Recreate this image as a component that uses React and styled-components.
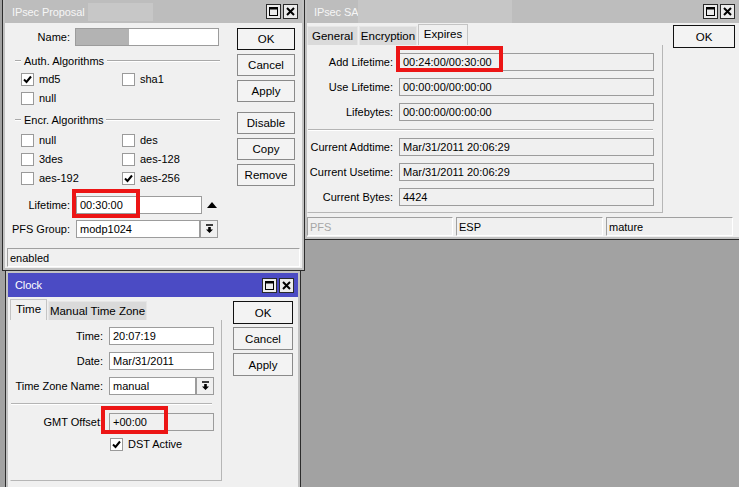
import React from "react";
import styled, { createGlobalStyle } from "styled-components";

const GlobalStyle = createGlobalStyle`
  html, body { margin: 0; padding: 0; }
  body {
    font-family: "Liberation Sans", Arial, sans-serif;
    font-size: 11px;
    color: #000;
  }
  * { box-sizing: border-box; }
`;

const Desktop = styled.div`
  position: relative;
  width: 739px;
  height: 487px;
  overflow: hidden;
  background: #a2a2a2;
`;

const Win = styled.div`
  position: absolute;
  left: ${(p) => p.$x}px;
  top: ${(p) => p.$y}px;
  width: ${(p) => p.$w}px;
  height: ${(p) => p.$h}px;
  border: 1px solid #2c2c2c;
  background: #c2c2c2;
  padding: ${(p) => p.$padTop || 0}px 2px 2px;
  display: flex;
  flex-direction: column;
`;

const TitleBar = styled.div`
  position: relative;
  flex-shrink: 0;
  height: ${(p) => p.$h}px;
  display: flex;
  align-items: center;
  padding: 0 4px 0 7px;
  background: ${(p) => (p.$active ? "#4b4bc4" : "#bdbdbd")};
  color: ${(p) => (p.$active ? "#ffffff" : "#f6f6f6")};
  font-size: 11px;
  letter-spacing: -0.1px;
`;

const TitleText = styled.span`
  flex: 1;
  white-space: nowrap;
`;

const TitleBtn = styled.div`
  width: 15px;
  height: 15px;
  margin-left: 2px;
  border: 1px solid #2a2a2a;
  background: #ececec;
  display: flex;
  align-items: center;
  justify-content: center;
`;

const Redact = styled.div`
  position: absolute;
  left: ${(p) => p.$x}px;
  top: ${(p) => p.$y}px;
  width: ${(p) => p.$w}px;
  height: ${(p) => p.$h}px;
  background: ${(p) => p.$c};
`;

const Body = styled.div`
  flex: 1;
  min-height: 0;
  background: #f0f0f0;
  display: flex;
  flex-direction: column;
`;

const Main = styled.div`
  flex: 1;
  display: flex;
  align-items: flex-start;
`;

const FormCol = styled.div`
  width: ${(p) => p.$w}px;
  padding-top: ${(p) => p.$pt || 0}px;
  padding-left: ${(p) => p.$pl || 0}px;
  display: flex;
  flex-direction: column;
`;

const ButtonCol = styled.div`
  display: flex;
  flex-direction: column;
  margin-left: ${(p) => p.$ml}px;
  padding-top: ${(p) => p.$pt}px;
`;

const Btn = styled.div`
  width: ${(p) => p.$w}px;
  height: ${(p) => p.$h}px;
  margin-top: ${(p) => p.$mt || 0}px;
  border: 1px solid ${(p) => (p.$default ? "#111" : "#8a8a8a")};
  background: #f3f3f3;
  display: flex;
  align-items: center;
  justify-content: center;
  font-size: 11.5px;
`;

const Row = styled.div`
  position: relative;
  display: flex;
  align-items: center;
  height: 18px;
  margin-top: ${(p) => p.$mt || 0}px;
`;

const Label = styled.div`
  width: ${(p) => p.$w}px;
  text-align: right;
  white-space: nowrap;
  flex-shrink: 0;
`;

const Field = styled.div`
  position: relative;
  width: ${(p) => p.$w}px;
  height: 18px;
  margin-left: ${(p) => p.$ml}px;
  border: 1px solid #9c9c9c;
  background: ${(p) => (p.$ro ? "#f0f0f0" : "#ffffff")};
  padding-left: 3px;
  display: flex;
  align-items: center;
  white-space: nowrap;
  overflow: hidden;
`;

const DropBtn = styled.div`
  width: 18px;
  height: 18px;
  border: 1px solid #9c9c9c;
  background: #f0f0f0;
  display: flex;
  align-items: center;
  justify-content: center;
`;

const Highlight = styled.div`
  position: absolute;
  left: ${(p) => p.$x}px;
  top: ${(p) => p.$y}px;
  width: ${(p) => p.$w}px;
  height: ${(p) => p.$h}px;
  border: 4px solid #ec1515;
  pointer-events: none;
`;

const GroupHeader = styled.div`
  display: flex;
  align-items: center;
  width: 215px;
  height: 14px;
  padding-left: 10px;
  margin-top: ${(p) => p.$mt}px;
`;

const Etch = styled.div`
  flex: ${(p) => (p.$grow ? 1 : "none")};
  width: ${(p) => (p.$grow ? "auto" : "6px")};
  border-top: 1px solid #a9a9a9;
  border-bottom: 1px solid #ffffff;
`;

const GroupTitle = styled.span`
  margin: 0 3px;
  white-space: nowrap;
`;

const CheckGrid = styled.div`
  display: grid;
  grid-template-columns: 101px 101px;
  grid-auto-rows: 19px;
  padding-left: 16px;
  margin-top: ${(p) => p.$mt}px;
`;

const CheckItem = styled.div`
  display: flex;
  align-items: flex-start;
  gap: 5px;
  line-height: 13px;
  padding-left: ${(p) => p.$pl || 0}px;
  margin-top: ${(p) => p.$mt || 0}px;
`;

const Box = styled.div`
  width: 13px;
  height: 13px;
  border: 1px solid #9a9a9a;
  background: #fff;
  display: flex;
  align-items: center;
  justify-content: center;
`;

const Separator = styled.div`
  height: 2px;
  border-top: 1px solid #b4b4b4;
  border-bottom: 1px solid #ffffff;
  margin: ${(p) => p.$m};
`;

const StatusBar = styled.div`
  display: flex;
  gap: ${(p) => p.$gap || 0}px;
  margin: 0 ${(p) => p.$mx}px 1px;
`;

const StatusCell = styled.div`
  width: ${(p) => p.$w}px;
  flex: ${(p) => (p.$w ? "none" : 1)};
  height: 19px;
  border: 1px solid #ffffff;
  border-top-color: #a0a0a0;
  border-left-color: #a0a0a0;
  padding-left: 2px;
  display: flex;
  align-items: center;
  color: ${(p) => (p.$muted ? "#a6a6a6" : "#000")};
`;

const TabCol = styled.div`
  display: flex;
  flex-direction: column;
  padding-left: ${(p) => p.$pl || 0}px;
`;

const TabRow = styled.div`
  display: flex;
  align-items: flex-end;
  height: ${(p) => p.$h}px;
  gap: 1px;
`;

const Tab = styled.div`
  width: ${(p) => p.$w}px;
  height: ${(p) => (p.$active ? p.$h + 2 : p.$h)}px;
  background: ${(p) => (p.$active ? "#f0f0f0" : "#dadada")};
  border: 1px solid ${(p) => (p.$active ? "#c4c4c4" : "#e6e6e6")};
  border-bottom: none;
  display: flex;
  align-items: center;
  justify-content: center;
  padding-bottom: ${(p) => (p.$active ? 3 : 0)}px;
  font-size: 11.5px;
  white-space: nowrap;
`;

const Panel = styled.div`
  width: ${(p) => p.$w}px;
  height: ${(p) => p.$h}px;
  border: 1px solid #b6b6b6;
  border-top: none;
  border-left-color: #f0f0f0;
  padding-top: ${(p) => p.$pt}px;
  display: flex;
  flex-direction: column;
`;

const UpArrow = styled.div`
  margin-left: 5px;
  display: flex;
  align-items: center;
`;

function MaxIcon() {
  return (
    <svg width="11" height="11" viewBox="0 0 11 11">
      <rect x="1.5" y="1.5" width="8" height="8" fill="none" stroke="#000" />
      <line x1="1" y1="2.5" x2="10" y2="2.5" stroke="#000" strokeWidth="2" />
    </svg>
  );
}

function CloseIcon() {
  return (
    <svg width="9" height="9" viewBox="0 0 9 9">
      <path d="M1 1L8 8M8 1L1 8" stroke="#000" strokeWidth="2" />
    </svg>
  );
}

function DropIcon() {
  return (
    <svg width="9" height="10" viewBox="0 0 9 10">
      <line x1="1" y1="1" x2="8" y2="1" stroke="#000" strokeWidth="1.5" />
      <path d="M4.5 9L1 5.5H3.2V3H5.8V5.5H8Z" fill="#000" />
    </svg>
  );
}

function Check({ checked }) {
  return (
    <Box>
      {checked && (
        <svg width="9" height="9" viewBox="0 0 9 9">
          <path d="M1 4.5L3.5 7L8 1.5" fill="none" stroke="#000" strokeWidth="2" />
        </svg>
      )}
    </Box>
  );
}

function Title({ text, active, h, children }) {
  return (
    <TitleBar $active={active} $h={h}>
      <TitleText>{text}</TitleText>
      {children}
      <TitleBtn>
        <MaxIcon />
      </TitleBtn>
      <TitleBtn>
        <CloseIcon />
      </TitleBtn>
    </TitleBar>
  );
}

function ProposalWindow() {
  return (
    <Win $x={2} $y={-1} $w={303} $h={272}>
      <Title text="IPsec Proposal" h={23}>
        <Redact $x={83} $y={3} $w={65} $h={18} $c="#c7c7c7" />
      </Title>
      <Body>
        <Main>
          <FormCol $w={225} $pt={5}>
            <Row>
              <Label $w={65}>Name:</Label>
              <Field $w={144} $ml={5}>
                <Redact $x={0} $y={0} $w={53} $h={16} $c="#b3b3b3" />
              </Field>
            </Row>
            <GroupHeader $mt={8}>
              <Etch />
              <GroupTitle>Auth. Algorithms</GroupTitle>
              <Etch $grow />
            </GroupHeader>
            <CheckGrid $mt={5}>
              <CheckItem><Check checked />md5</CheckItem>
              <CheckItem><Check />sha1</CheckItem>
              <CheckItem><Check />null</CheckItem>
            </CheckGrid>
            <GroupHeader $mt={2}>
              <Etch />
              <GroupTitle>Encr. Algorithms</GroupTitle>
              <Etch $grow />
            </GroupHeader>
            <CheckGrid $mt={7}>
              <CheckItem><Check />null</CheckItem>
              <CheckItem><Check />des</CheckItem>
              <CheckItem><Check />3des</CheckItem>
              <CheckItem><Check />aes-128</CheckItem>
              <CheckItem><Check />aes-192</CheckItem>
              <CheckItem><Check checked />aes-256</CheckItem>
            </CheckGrid>
            <Row $mt={5}>
              <Label $w={65}>Lifetime:</Label>
              <Field $w={126} $ml={6}>00:30:00</Field>
              <UpArrow>
                <svg width="10" height="6" viewBox="0 0 10 6">
                  <polygon points="0,6 5,0 10,6" fill="#000" />
                </svg>
              </UpArrow>
              <Highlight $x={67} $y={-7} $w={68} $h={29} />
            </Row>
            <Row $mt={6}>
              <Label $w={65}>PFS Group:</Label>
              <Field $w={124} $ml={6}>modp1024</Field>
              <DropBtn>
                <DropIcon />
              </DropBtn>
            </Row>
          </FormCol>
          <ButtonCol $ml={7} $pt={5}>
            <Btn $w={58} $h={22} $default>OK</Btn>
            <Btn $w={58} $h={22} $mt={4}>Cancel</Btn>
            <Btn $w={58} $h={22} $mt={4}>Apply</Btn>
            <Btn $w={58} $h={22} $mt={10}>Disable</Btn>
            <Btn $w={58} $h={22} $mt={4}>Copy</Btn>
            <Btn $w={58} $h={22} $mt={4}>Remove</Btn>
          </ButtonCol>
        </Main>
        <StatusBar $mx={2}>
          <StatusCell>enabled</StatusCell>
        </StatusBar>
      </Body>
    </Win>
  );
}

const saRows = [
  { label: "Add Lifetime:", value: "00:24:00/00:30:00", mark: true },
  { label: "Use Lifetime:", value: "00:00:00/00:00:00" },
  { label: "Lifebytes:", value: "00:00:00/00:00:00" },
];

const saCurrent = [
  { label: "Current Addtime:", value: "Mar/31/2011 20:06:29" },
  { label: "Current Usetime:", value: "Mar/31/2011 20:06:29" },
  { label: "Current Bytes:", value: "4424" },
];

function SAWindow() {
  return (
    <Win $x={304} $y={-1} $w={438} $h={241}>
      <Title text="IPsec SA" h={23}>
        <Redact $x={51} $y={0} $w={154} $h={23} $c="#c6c6c6" />
      </Title>
      <Body>
        <Main>
          <TabCol>
            <TabRow $h={22}>
              <Tab $w={51} $h={19}>General</Tab>
              <Tab $w={58} $h={19}>Encryption</Tab>
              <Tab $w={50} $h={19} $active>Expires</Tab>
            </TabRow>
            <Panel $w={356} $h={168} $pt={8}>
              {saRows.map((r, i) => (
                <Row key={r.label} $mt={i ? 7 : 0}>
                  <Label $w={85}>{r.label}</Label>
                  <Field $w={255} $ml={6} $ro>{r.value}</Field>
                  {r.mark && <Highlight $x={88} $y={-7} $w={107} $h={26} />}
                </Row>
              ))}
              <Separator $m="8px 9px 7px 0" />
              {saCurrent.map((r, i) => (
                <Row key={r.label} $mt={i ? 7 : 0}>
                  <Label $w={85}>{r.label}</Label>
                  <Field $w={255} $ml={6} $ro>{r.value}</Field>
                </Row>
              ))}
            </Panel>
          </TabCol>
          <ButtonCol $ml={10} $pt={2}>
            <Btn $w={62} $h={23} $default>OK</Btn>
          </ButtonCol>
        </Main>
        <StatusBar $mx={0} $gap={3}>
          <StatusCell $w={146} $muted>PFS</StatusCell>
          <StatusCell $w={147}>ESP</StatusCell>
          <StatusCell $w={127}>mature</StatusCell>
        </StatusBar>
      </Body>
    </Win>
  );
}

function ClockWindow() {
  return (
    <Win $x={5} $y={270} $w={296} $h={230} $padTop={2}>
      <Title text="Clock" h={24} active />
      <Body>
        <Main>
          <TabCol $pl={2}>
            <TabRow $h={23}>
              <Tab $w={37} $h={19} $active>Time</Tab>
              <Tab $w={99} $h={19}>Manual Time Zone</Tab>
            </TabRow>
            <Panel $w={212} $h={161} $pt={7}>
              <Row>
                <Label $w={92}>Time:</Label>
                <Field $w={105} $ml={6}>20:07:19</Field>
              </Row>
              <Row $mt={7}>
                <Label $w={92}>Date:</Label>
                <Field $w={105} $ml={6}>Mar/31/2011</Field>
              </Row>
              <Row $mt={7}>
                <Label $w={92}>Time Zone Name:</Label>
                <Field $w={87} $ml={6}>manual</Field>
                <DropBtn>
                  <DropIcon />
                </DropBtn>
              </Row>
              <Separator $m="8px 9px 8px 0" />
              <Row>
                <Label $w={92}>GMT Offset:</Label>
                <Field $w={105} $ml={6} $ro>+00:00</Field>
                <Highlight $x={90} $y={-7} $w={67} $h={28} />
              </Row>
              <CheckItem $pl={99} $mt={7}>
                <Check checked />
                DST Active
              </CheckItem>
            </Panel>
          </TabCol>
          <ButtonCol $ml={11} $pt={4}>
            <Btn $w={60} $h={23} $default>OK</Btn>
            <Btn $w={60} $h={23} $mt={3}>Cancel</Btn>
            <Btn $w={60} $h={23} $mt={3}>Apply</Btn>
          </ButtonCol>
        </Main>
      </Body>
    </Win>
  );
}

export default function App() {
  return (
    <>
      <GlobalStyle />
      <Desktop>
        <ProposalWindow />
        <SAWindow />
        <ClockWindow />
      </Desktop>
    </>
  );
}
